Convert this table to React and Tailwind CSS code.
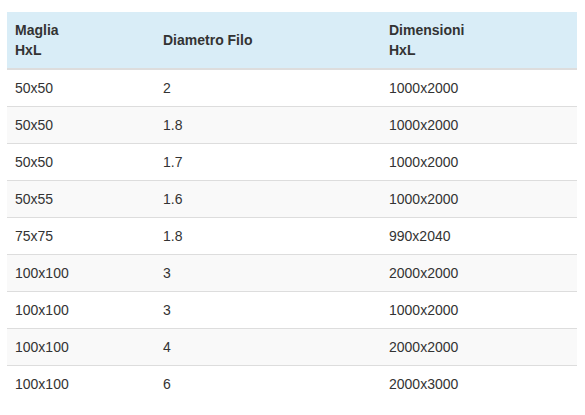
import React from "react";

const rows = [
  ["50x50", "2", "1000x2000"],
  ["50x50", "1.8", "1000x2000"],
  ["50x50", "1.7", "1000x2000"],
  ["50x55", "1.6", "1000x2000"],
  ["75x75", "1.8", "990x2040"],
  ["100x100", "3", "2000x2000"],
  ["100x100", "3", "1000x2000"],
  ["100x100", "4", "2000x2000"],
  ["100x100", "6", "2000x3000"],
];

const App = () => {
  return (
    <div className="w-[585px] h-[415px] bg-white pl-[7px] pt-[12px] font-['Liberation_Sans',Arial,sans-serif] text-[14px] leading-[20px] text-[#333]">
      <table className="w-[570px] border-collapse table-fixed">
        <colgroup>
          <col className="w-[148px]" />
          <col className="w-[226px]" />
          <col className="w-[196px]" />
        </colgroup>
        <thead>
          <tr className="bg-[#d9edf7] border-b-2 border-[#ddd]">
            <th className="p-2 text-left font-bold align-middle">
              Maglia
              <br />
              HxL
            </th>
            <th className="p-2 text-left font-bold align-middle">Diametro Filo</th>
            <th className="p-2 text-left font-bold align-middle">
              Dimensioni
              <br />
              HxL
            </th>
          </tr>
        </thead>
        <tbody>
          {rows.map((r, i) => (
            <tr
              key={i}
              className={`border-t border-[#ddd] ${i % 2 === 1 ? "bg-[#f9f9f9]" : "bg-white"}`}
            >
              <td className="p-2">{r[0]}</td>
              <td className="p-2">{r[1]}</td>
              <td className="p-2">{r[2]}</td>
            </tr>
          ))}
        </tbody>
      </table>
    </div>
  );
};

export default App;
